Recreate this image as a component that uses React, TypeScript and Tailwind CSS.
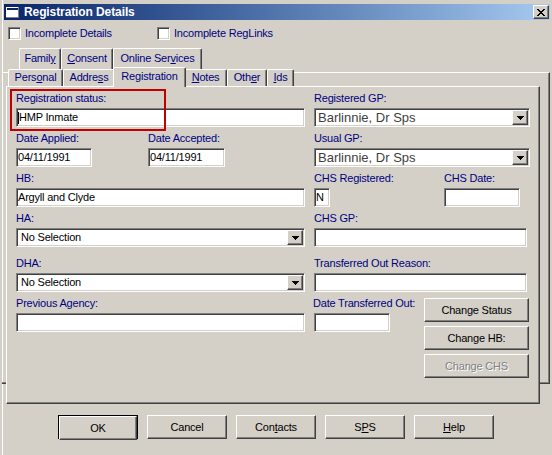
import React from 'react';

// win2000 style 3d edges
const raised =
  'bg-[#d4d0c8] border border-t-white border-l-white border-r-[#404040] border-b-[#404040] shadow-[inset_-1px_-1px_0_#808080]';
const sunken =
  'bg-white border border-t-[#808080] border-l-[#808080] border-r-white border-b-white shadow-[inset_1px_1px_0_#404040,inset_-1px_-1px_0_#d4d0c8]';

function Label({ children, className = '' }: { children: React.ReactNode; className?: string }) {
  return (
    <div className={`h-[13px] leading-[13px] text-[#000080] whitespace-nowrap ${className}`}>{children}</div>
  );
}

function Edit({ children, className = '' }: { children?: React.ReactNode; className?: string }) {
  return (
    <div
      className={`${sunken} mt-[3px] h-[19px] pl-[1px] leading-[17px] text-black whitespace-nowrap overflow-hidden flex items-center ${className}`}
    >
      {children}
    </div>
  );
}

function Arrow() {
  return (
    <svg width="7" height="4" viewBox="0 0 7 4" shapeRendering="crispEdges">
      <path d="M0 0h7v1H0zM1 1h5v1H1zM2 2h3v1H2zM3 3h1v1H3z" fill="#000" />
    </svg>
  );
}

function Combo({ children, big, className = '' }: { children: React.ReactNode; big?: boolean; className?: string }) {
  return (
    <div className={`${sunken} mt-[3px] h-[19px] p-[1px] flex ${className}`}>
      <div
        className={
          big
            ? 'flex-1 pl-[2px] text-[13px] leading-[15px] tracking-normal text-[#404040] whitespace-nowrap overflow-hidden'
            : 'flex-1 pl-[3px] leading-[15px] text-black whitespace-nowrap overflow-hidden'
        }
      >
        {children}
      </div>
      <div className={`${raised} w-[16px] h-[15px] flex items-center justify-center`}>
        <Arrow />
      </div>
    </div>
  );
}

function Btn({ children, className = '', disabled }: { children: React.ReactNode; className?: string; disabled?: boolean }) {
  return (
    <div
      className={`${raised} h-[24px] flex items-center justify-center whitespace-nowrap ${
        disabled ? 'text-[#808080] [text-shadow:1px_1px_0_#fff]' : 'text-black'
      } ${className}`}
    >
      {children}
    </div>
  );
}

function Check({ children }: { children: React.ReactNode }) {
  return (
    <div className="flex items-center">
      <div className={`${sunken} w-[13px] h-[13px]`} />
      <span className="ml-[4px] leading-[13px] text-[#000080]">{children}</span>
    </div>
  );
}

function BackTab({ children, className = '' }: { children: React.ReactNode; className?: string }) {
  return (
    <div
      className={`h-[24px] pt-[3px] text-center leading-[13px] text-[#000080] whitespace-nowrap border-t border-l border-r border-t-white border-l-white border-r-[#404040] shadow-[inset_-1px_0_0_#808080] rounded-t-[2px] ${className}`}
    >
      {children}
    </div>
  );
}

function FrontTab({
  children,
  className = '',
  selected,
}: {
  children: React.ReactNode;
  className?: string;
  selected?: boolean;
}) {
  return (
    <div
      className={`bg-[#d4d0c8] text-center leading-[13px] text-[#000080] whitespace-nowrap border-t border-l border-r border-t-white border-l-white border-r-[#404040] shadow-[inset_-1px_0_0_#808080] rounded-t-[2px] ${
        selected ? 'relative z-20 -mt-[2px] h-[20px] pt-[2px] -mx-[2px]' : 'h-[17px] pt-[1px]'
      } ${className}`}
    >
      {children}
    </div>
  );
}

export default function App() {
  return (
    <div className="relative w-[552px] h-[455px] overflow-hidden bg-[#d4d0c8] pl-[2px] font-['Liberation_Sans',Arial,sans-serif] text-[11px] tracking-[-0.2px]">
      <div className="h-full border-l border-white pl-[1px] pt-[4px] flex flex-col">
        {/* title bar */}
        <div className="h-[16px] w-[546px] bg-linear-to-r from-[#0a246a] to-[#a6caf0] flex items-center pl-[2px]">
          <svg width="13" height="11" viewBox="0 0 13 11" shapeRendering="crispEdges">
            <rect x="0" y="0" width="13" height="11" fill="#fff" />
            <rect x="1" y="1" width="11" height="2" fill="#0a246a" />
            <rect x="12" y="0" width="1" height="11" fill="#808080" />
            <rect x="0" y="10" width="13" height="1" fill="#808080" />
          </svg>
          <span className="ml-[5px] text-white font-bold text-[12px] leading-[16px] tracking-[-0.1px]">
            Registration Details
          </span>
          <div className={`${raised} ml-auto mr-[1px] w-[16px] h-[14px] flex items-center justify-center`}>
            <svg width="8" height="7" viewBox="0 0 8 7" shapeRendering="crispEdges">
              <path
                d="M0 0h2v1H0zM6 0h2v1H6zM1 1h2v1H1zM5 1h2v1H5zM2 2h4v1H2zM3 3h2v1H3zM2 4h4v1H2zM1 5h2v1H1zM5 5h2v1H5zM0 6h2v1H0zM6 6h2v1H6z"
                fill="#000"
              />
            </svg>
          </div>
        </div>

        {/* check boxes */}
        <div className="mt-[7px] h-[13px] flex">
          <div className="ml-[4px] w-[149px]">
            <Check>Incomplete Details</Check>
          </div>
          <Check>Incomplete RegLinks</Check>
        </div>

        {/* tab control */}
        <div className="relative mt-[8px] w-[546px]">
          <div className="absolute left-[-2px] top-[24px] w-[548px] h-[312px] border-t border-t-white border-r border-b border-r-[#404040] border-b-[#404040] shadow-[inset_-1px_-1px_0_#808080]" />

          <div className="h-[21px] pl-[15px] flex overflow-hidden">
            <BackTab className="w-[42px]">
              Famil<span className="underline underline-offset-[1px]">y</span>
            </BackTab>
            <BackTab className="w-[52px]">
              <span className="underline underline-offset-[1px]">C</span>onsent
            </BackTab>
            <BackTab className="w-[89px]">
              Online Ser<span className="underline underline-offset-[1px]">v</span>ices
            </BackTab>
          </div>

          <div className="relative z-10 h-[17px] pl-[4px] flex">
            <FrontTab className="w-[55px]">
              Pers<span className="underline underline-offset-[1px]">o</span>nal
            </FrontTab>
            <FrontTab className="w-[52px]">
              Addre<span className="underline underline-offset-[1px]">s</span>s
            </FrontTab>
            <FrontTab className="w-[73px]" selected>
              Registration
            </FrontTab>
            <FrontTab className="w-[43px]">
              <span className="underline underline-offset-[1px]">N</span>otes
            </FrontTab>
            <FrontTab className="w-[40px]">
              Oth<span className="underline underline-offset-[1px]">e</span>r
            </FrontTab>
            <FrontTab className="w-[27px]">
              <span className="underline underline-offset-[1px]">I</span>ds
            </FrontTab>
          </div>

          <div className="relative ml-[2px] w-[534px] h-[318px] bg-[#d4d0c8] border-t border-l border-t-white border-l-white border-r border-b border-r-[#404040] border-b-[#404040] shadow-[inset_-1px_-1px_0_#808080] pt-[5px] pl-[9px]">
            {/* row 1 */}
            <div className="flex gap-[9px]">
              <div className="w-[289px]">
                <Label>Registration status:</Label>
                <Edit className="w-[289px]">
                  <span className="inline-block w-[1px] h-[12px] bg-black" />
                  HMP Inmate
                </Edit>
              </div>
              <div className="w-[216px]">
                <Label>Registered GP:</Label>
                <Combo big className="w-[216px]">
                  Barlinnie, Dr Sps
                </Combo>
              </div>
            </div>

            {/* row 2 */}
            <div className="mt-[5px] flex gap-[9px]">
              <div className="w-[289px] flex">
                <div className="w-[132px]">
                  <Label>Date Applied:</Label>
                  <Edit className="w-[76px]">04/11/1991</Edit>
                </div>
                <div>
                  <Label>Date Accepted:</Label>
                  <Edit className="w-[77px]">04/11/1991</Edit>
                </div>
              </div>
              <div className="w-[216px]">
                <Label>Usual GP:</Label>
                <Combo big className="w-[216px]">
                  Barlinnie, Dr Sps
                </Combo>
              </div>
            </div>

            {/* row 3 */}
            <div className="mt-[5px] flex gap-[9px]">
              <div className="w-[289px]">
                <Label>HB:</Label>
                <Edit className="w-[289px]">Argyll and Clyde</Edit>
              </div>
              <div className="w-[216px] flex">
                <div className="w-[130px]">
                  <Label>CHS Registered:</Label>
                  <Edit className="w-[16px]">N</Edit>
                </div>
                <div>
                  <Label>CHS Date:</Label>
                  <Edit className="w-[76px]" />
                </div>
              </div>
            </div>

            {/* row 4 */}
            <div className="mt-[5px] flex gap-[9px]">
              <div className="w-[289px]">
                <Label>HA:</Label>
                <Combo className="w-[289px]">No Selection</Combo>
              </div>
              <div className="w-[216px]">
                <Label>CHS GP:</Label>
                <Edit className="w-[213px]" />
              </div>
            </div>

            {/* row 5 */}
            <div className="mt-[10px] flex gap-[9px]">
              <div className="w-[289px]">
                <Label>DHA:</Label>
                <Combo className="w-[289px]">No Selection</Combo>
              </div>
              <div className="w-[216px]">
                <Label>Transferred Out Reason:</Label>
                <Edit className="w-[213px]" />
              </div>
            </div>

            {/* row 6 */}
            <div className="mt-[5px] flex gap-[9px]">
              <div className="w-[289px]">
                <Label>Previous Agency:</Label>
                <Edit className="w-[289px]" />
              </div>
              <div className="w-[216px] flex">
                <div className="w-[110px]">
                  <Label className="-ml-[1px]">Date Transferred Out:</Label>
                  <Edit className="w-[76px]" />
                </div>
                <div className="mt-[1px] flex flex-col gap-[4px]">
                  <Btn className="w-[105px]">Change Status</Btn>
                  <Btn className="w-[105px]">Change HB:</Btn>
                  <Btn className="w-[105px]" disabled>
                    Change CHS
                  </Btn>
                </div>
              </div>
            </div>
          </div>
        </div>

        {/* dialog buttons */}
        <div className="mt-[11px] pl-[54px] flex gap-[9px]">
          <div className="w-[80px] h-[24px] border border-black">
            <Btn className="h-[22px]">OK</Btn>
          </div>
          <Btn className="w-[80px]">Cancel</Btn>
          <Btn className="w-[80px]">
            Con<span className="underline underline-offset-[1px]">t</span>acts
          </Btn>
          <Btn className="w-[80px]">
            S<span className="underline underline-offset-[1px]">P</span>S
          </Btn>
          <Btn className="w-[80px]">
            <span className="underline underline-offset-[1px]">H</span>elp
          </Btn>
        </div>
      </div>

      {/* red highlight */}
      <div className="absolute left-[10px] top-[89px] w-[156px] h-[42px] border-2 border-[#c00000] pointer-events-none z-30" />
    </div>
  );
}
